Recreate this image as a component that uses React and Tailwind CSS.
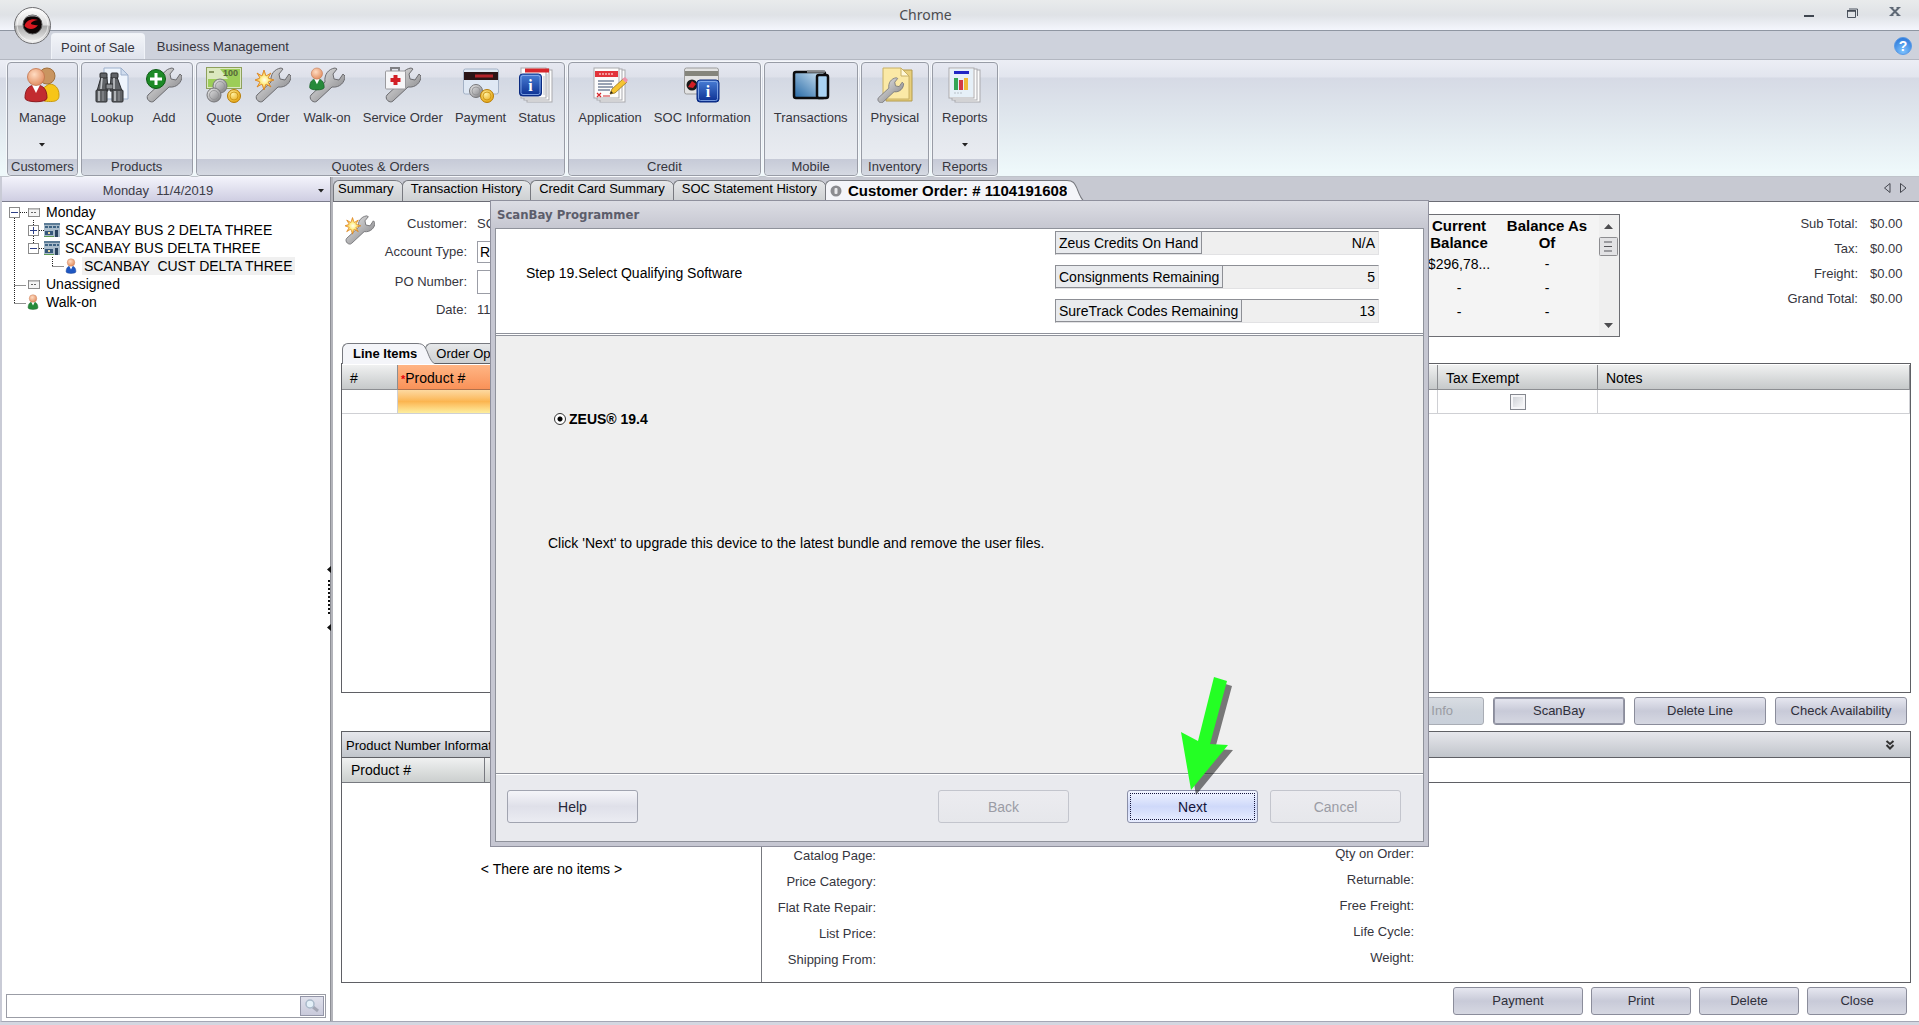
import { useState } from "react";

const WRENCH =
  "M2 28 L16 15 C15 8 19 2 26 1 L28 2 L24 7 L25 12 L30 13 L34 7 L36 9 C36 15 31 21 23 20 L8 34 C5 37 -1 32 2 28 Z";

// Shared gradients for the icons
const IconDefs = () => (
  <svg width="0" height="0" className="absolute" aria-hidden="true">
    <defs>
      <linearGradient id="steel" x1="0" y1="0" x2="1" y2="1">
        <stop offset="0" stopColor="#eeeeee" />
        <stop offset="0.5" stopColor="#b4b4b6" />
        <stop offset="1" stopColor="#77777a" />
      </linearGradient>
      <radialGradient id="skin" cx="0.4" cy="0.35" r="0.7">
        <stop offset="0" stopColor="#ffdcc2" />
        <stop offset="1" stopColor="#e08a5c" />
      </radialGradient>
      <radialGradient id="gold" cx="0.4" cy="0.35" r="0.7">
        <stop offset="0" stopColor="#fff0a0" />
        <stop offset="1" stopColor="#e3a008" />
      </radialGradient>
      <radialGradient id="glow">
        <stop offset="0" stopColor="#fffdf0" />
        <stop offset="0.4" stopColor="#fff08a" />
        <stop offset="1" stopColor="#f39a1e" />
      </radialGradient>
      <linearGradient id="blue" x1="0" y1="0" x2="0" y2="1">
        <stop offset="0" stopColor="#4a7fd6" />
        <stop offset="1" stopColor="#0b2f91" />
      </linearGradient>
      <linearGradient id="screen" x1="1" y1="0" x2="0" y2="1">
        <stop offset="0" stopColor="#d9ecf9" />
        <stop offset="1" stopColor="#2467a4" />
      </linearGradient>
      <linearGradient id="orb" x1="0" y1="0" x2="0" y2="1">
        <stop offset="0" stopColor="#ffffff" />
        <stop offset="0.48" stopColor="#dcdcdc" />
        <stop offset="0.52" stopColor="#a9a9a9" />
        <stop offset="1" stopColor="#f6f6f6" />
      </linearGradient>
      <linearGradient id="tab" x1="0" y1="0" x2="0" y2="1">
        <stop offset="0" stopColor="#e6e8ea" />
        <stop offset="0.5" stopColor="#d9dbdd" />
        <stop offset="1" stopColor="#cdd0d2" />
      </linearGradient>
      <radialGradient id="help" cx="0.5" cy="0.8" r="0.8">
        <stop offset="0" stopColor="#7fc4ff" />
        <stop offset="1" stopColor="#2b76d8" />
      </radialGradient>
    </defs>
  </svg>
);

const Icon = ({ children, className = "size-9" }) => (
  <svg viewBox="0 0 36 36" className={className} aria-hidden="true">
    {children}
  </svg>
);

const Wrench = () => <path d={WRENCH} fill="url(#steel)" stroke="#6c6c70" strokeWidth="1" />;

const Coin = ({ cx, cy, r = 6.5, gold }) => (
  <g>
    <circle cx={cx} cy={cy} r={r} fill={gold ? "url(#gold)" : "url(#steel)"} stroke={gold ? "#b87d08" : "#77777a"} />
    <circle cx={cx} cy={cy} r={r - 2.5} fill="none" stroke={gold ? "#c8900f" : "#909093"} strokeWidth="0.8" />
  </g>
);

const Star = () => (
  <path
    d="M9 3 L11 9 L16 6 L13 11 L19 13 L13 15 L16 20 L11 17 L9 23 L7 17 L2 20 L5 15 L0 13 L5 11 L2 6 L7 9 Z"
    fill="url(#glow)"
    stroke="#d9801a"
    strokeWidth="0.8"
  />
);

const InfoBadge = ({ x, y, s }) => (
  <g>
    <rect x={x} y={y} width={s} height={s} rx="3" fill="url(#blue)" stroke="#0a2a80" />
    <rect x={x + 1.5} y={y + 1.5} width={s - 3} height={s - 3} rx="2" fill="none" stroke="#8fb3ee" strokeWidth="0.8" />
    <text x={x + s / 2} y={y + s * 0.76} textAnchor="middle" fontSize={s * 0.72} fontWeight="bold" fill="#fff" className="font-['Liberation_Serif',serif]">
      i
    </text>
  </g>
);

const Pages = () => (
  <g fill="#fcfcfc" stroke="#a9a9ad">
    <rect x="8" y="3" width="25" height="32" />
    <rect x="5" y="2" width="25" height="31" />
    <rect x="2" y="1" width="25" height="30" />
  </g>
);

const Person = ({ shirt, edge }) => (
  <g>
    <path d="M1 31 C1 22 5 18 12 18 C19 18 23 22 23 31 C23 36 1 36 1 31 Z" fill={shirt} stroke={edge} />
    <path d="M8 18 L12 26 L16 18 Z" fill="#fff" />
    <circle cx="12" cy="10" r="8.5" fill="url(#skin)" stroke="#c0714a" strokeWidth="0.8" />
  </g>
);

const icons = {
  manage: (
    <Icon>
      <path d="M20 34 C34 36 35 32 35 28 C35 21 31 17 25 17 L18 22 Z" fill="#f7c518" stroke="#c99a10" />
      <circle cx="23" cy="9" r="8" fill="#c99560" stroke="#a0703c" />
      <Person shirt="#c22b30" edge="#8e1a1e" />
    </Icon>
  ),
  lookup: (
    <Icon>
      <path d="M10 1 H27 L34 8 V32 H10 Z" fill="#eef4fc" stroke="#9db0cc" />
      <path d="M27 1 V8 H34 Z" fill="#cfdcee" stroke="#9db0cc" />
      <g fill="#606367" stroke="#2a2c2f">
        <path d="M7 10 H13 L14 24 H3 Z M17 10 H23 L28 24 H16 Z" />
        <rect x="6" y="6" width="7" height="5" rx="1" />
        <rect x="17" y="6" width="7" height="5" rx="1" />
        <rect x="12" y="17" width="7" height="5" fill="#8b8e92" />
        <rect x="2" y="23" width="11" height="12" rx="1" />
        <rect x="18" y="23" width="11" height="12" rx="1" />
      </g>
      <path d="M5 24 V34 M8 11 L7 22 M21 24 V34 M20 11 V22" stroke="#c3c6ca" strokeWidth="1.6" />
      <path d="M9 24 V34 M25 24 V34" stroke="#8d9094" strokeWidth="1.2" />
    </Icon>
  ),
  add: (
    <Icon>
      <Wrench />
      <circle cx="10" cy="12" r="9.5" fill="#1d8a26" stroke="#0d5a14" />
      <path d="M10 6 V18 M4 12 H16" stroke="#fff" strokeWidth="3" />
    </Icon>
  ),
  quote: (
    <Icon>
      <rect x="0.5" y="0.5" width="35" height="21" fill="#dbe8bf" stroke="#8ea05c" />
      <path d="M2 12 H22 L14 2 H34 V20 H2 Z" fill="#8cc63f" fillOpacity="0.8" />
      <path d="M3 5 H8" stroke="#6a7a40" strokeWidth="1.5" />
      <text x="17" y="9" fontSize="9" fontWeight="bold" fill="#56683a">100</text>
      <Coin cx={14} cy={19} r={7} />
      <Coin cx={8} cy={28} r={7} />
      <Coin cx={28} cy={29} gold />
    </Icon>
  ),
  order: (
    <Icon>
      <Wrench />
      <Star />
    </Icon>
  ),
  walkon: (
    <Icon>
      <Wrench />
      <g transform="scale(0.66)">
        <Person shirt="#268a3a" edge="#135a22" />
      </g>
    </Icon>
  ),
  service: (
    <Icon>
      <Wrench />
      <path d="M6 4 V1 H14 V4" fill="none" stroke="#808084" strokeWidth="2" />
      <rect x="0.5" y="4" width="20" height="18" rx="1" fill="#f6f6f8" stroke="#9a9a9e" />
      <path d="M10.500 8 V18 M5.500 13 H15.500" stroke="#d21f26" strokeWidth="4" />
    </Icon>
  ),
  payment: (
    <Icon className="h-9 w-10">
      <rect x="0.5" y="2" width="35" height="25" rx="2" fill="#dfe8f4" stroke="#a4b2c6" />
      <rect x="1" y="5" width="34" height="8" fill="#2a1416" />
      <path d="M12 9 H30" stroke="#b3222a" strokeWidth="3" />
      <Coin cx={13} cy={24} />
      <Coin cx={24} cy={29} gold />
    </Icon>
  ),
  status: (
    <Icon>
      <Pages />
      <rect x="6" y="1.500" width="24" height="4" fill="#d7262b" />
      <path d="M28 7 V30 M25 9 V28" stroke="#c2c4ca" strokeWidth="1" />
      <InfoBadge x={0.5} y={7} s={22} />
    </Icon>
  ),
  application: (
    <Icon>
      <Pages />
      <rect x="3" y="4" width="23" height="6" fill="#e2343b" />
      <path d="M7 7 H21" stroke="#f7b9bb" strokeWidth="1.500" strokeDasharray="2 1" />
      <path d="M6 14 H22 M6 17 H20 M6 20 H21 M6 23 H18" stroke="#75839a" strokeWidth="1.300" />
      <path d="M5 26 L9 30 M9 26 L5 30" stroke="#d7262b" strokeWidth="1.200" />
      <path d="M11 29 H18" stroke="#d7262b" />
      <path d="M18 27 L20 22 L31 12 L35 15 L23 26 Z" fill="#f5c431" stroke="#97721a" strokeWidth="0.8" />
      <path d="M30 12 L33 10 L36 13 L34 16 Z" fill="#ee93a8" />
      <path d="M18 27 L19 24 L21 26 Z" fill="#222" />
    </Icon>
  ),
  soc: (
    <Icon className="h-9 w-10">
      <rect x="0.500" y="1" width="34" height="26" rx="2" fill="#e3e3e3" stroke="#9b9b9b" />
      <rect x="1" y="4" width="33" height="5" fill="#85857c" />
      <circle cx="8" cy="18" r="5.500" fill="#1a1a1a" />
      <path d="M4 20 L8 14 L12 17 L9 21 Z" fill="#d21f26" />
      <InfoBadge x={13} y={13} s={22} />
    </Icon>
  ),
  transactions: (
    <Icon className="h-9 w-10">
      <rect x="1" y="5" width="31" height="26" rx="2" fill="url(#screen)" stroke="#0c0c0e" strokeWidth="2.500" />
      <path d="M14 4.500 H32" stroke="#85888c" strokeWidth="2.500" />
      <rect x="24" y="8" width="11" height="23" rx="2" fill="#a9d2f2" stroke="#0c0c0e" strokeWidth="2.500" />
    </Icon>
  ),
  physical: (
    <Icon>
      <path d="M9 3 H35 V34 H9 Z" fill="#e8cf7c" stroke="#b39a4c" />
      <path d="M6 1 H24 L32 9 V32 H6 Z" fill="#fbe9a6" stroke="#c8b064" />
      <path d="M24 1 V9 H32 Z" fill="#fff8d8" stroke="#c8b064" />
      <g transform="translate(0 10) scale(0.74)">
        <Wrench />
      </g>
    </Icon>
  ),
  reports: (
    <Icon>
      <Pages />
      <rect x="3" y="2" width="23" height="28" fill="#e6f0f8" />
      <rect x="7" y="4" width="15" height="3" fill="#2026c4" />
      <rect x="7" y="11" width="4" height="12" fill="#35a556" />
      <rect x="12" y="13" width="4" height="10" fill="#d23a44" />
      <rect x="17" y="11" width="4" height="12" fill="#f0bb38" />
      <path d="M7 26 H16" stroke="#b8c0c8" strokeDasharray="2 1" />
    </Icon>
  ),
};

const ribbon = [
  { title: "Customers", items: [{ label: "Manage", icon: "manage", menu: true }] },
  { title: "Products", items: [{ label: "Lookup", icon: "lookup" }, { label: "Add", icon: "add" }] },
  {
    title: "Quotes & Orders",
    items: [
      { label: "Quote", icon: "quote" },
      { label: "Order", icon: "order" },
      { label: "Walk-on", icon: "walkon" },
      { label: "Service Order", icon: "service" },
      { label: "Payment", icon: "payment" },
      { label: "Status", icon: "status" },
    ],
  },
  { title: "Credit", items: [{ label: "Application", icon: "application" }, { label: "SOC Information", icon: "soc" }] },
  { title: "Mobile", items: [{ label: "Transactions", icon: "transactions" }] },
  { title: "Inventory", items: [{ label: "Physical", icon: "physical" }] },
  { title: "Reports", items: [{ label: "Reports", icon: "reports", menu: true }] },
];

const Caret = ({ className = "" }) => (
  <svg viewBox="0 0 6 4" className={`h-1 w-1.5 ${className}`} aria-hidden="true">
    <path d="M0 0 H6 L3 3.500 Z" fill="#222" />
  </svg>
);

const TitleBar = () => (
  <header className="relative flex h-[31px] shrink-0 items-center justify-center border-b border-[#8f96a2] bg-linear-to-b from-[#e9ebec] via-[#dfe2e6] to-[#f4f6fd]">
    <h1 className="pr-[68px] font-['Noto_Sans',sans-serif] text-sm text-[#4c4c50]">Chrome</h1>
    <div className="absolute top-0 right-3.5 flex h-[26px] items-center gap-[23px]">
      <button aria-label="Minimize" className="w-5">
        <svg viewBox="0 0 20 14" className="h-3.5 w-5"><path d="M5 10 H15" stroke="#3f4650" strokeWidth="2" /></svg>
      </button>
      <button aria-label="Restore" className="w-5">
        <svg viewBox="0 0 20 14" className="h-3.5 w-5">
          <path d="M5.500 4.500 H13.500 V11.500 H5.500 Z M7 3 H15.500 V10" fill="none" stroke="#4d5560" />
          <path d="M5 5 H14" stroke="#3f4650" strokeWidth="1.500" />
        </svg>
      </button>
      <button aria-label="Close window" className="w-5">
        <svg viewBox="0 0 20 14" className="h-3.5 w-5">
          <path d="M6 1.500 L14 9.500 M14 1.500 L6 9.500" stroke="#5e6875" strokeWidth="2" />
          <path d="M4.500 1.500 H8.500 M11.500 1.500 H15.500 M4.500 9.500 H8.500 M11.500 9.500 H15.500" stroke="#5e6875" />
        </svg>
      </button>
    </div>
    <button aria-label="Application menu" className="absolute top-[7px] left-3.5 z-10 size-[37px]">
      <svg viewBox="0 0 37 37" className="size-[37px]">
        <circle cx="18.500" cy="18.500" r="18" fill="url(#orb)" stroke="#6d6d70" />
        <circle cx="18.500" cy="18.500" r="15.500" fill="none" stroke="#fff" strokeOpacity="0.600" />
        <circle cx="18.500" cy="17.500" r="9.500" fill="#0d0505" stroke="#555" />
        <path d="M10.500 19 C12 13 18 11 24 13 C20 13.500 17 15 17 17 C19 18 22 18.500 24 18 C21 23 14 23 10.500 19 Z" fill="#d81820" />
        <path d="M11 11 C14 7 23 7 26 11 C22 9 15 9 11 11 Z" fill="#8f8f92" />
      </svg>
    </button>
  </header>
);

const RibbonTabs = () => (
  <nav className="flex h-[29px] shrink-0 items-end border-b border-[#b3b7c1] bg-[#ced2dc] pl-[51px]">
    <a href="#pos" className="flex h-[26px] items-center rounded-t border border-b-0 border-[#f0f3f8] bg-linear-to-b from-[#f3f5f9] to-[#dfe3ec] px-[9px] pt-0.5">
      Point of Sale
    </a>
    <a href="#business" className="flex h-[26px] items-center px-3 pt-0.5">Business Management</a>
    <button aria-label="Help topics" className="mr-[7px] mb-1 ml-auto">
      <svg viewBox="0 0 18 18" className="size-[18px]">
        <circle cx="9" cy="9" r="8.500" fill="url(#help)" stroke="#5b9be6" />
        <text x="9" y="14" textAnchor="middle" fontSize="14" fontWeight="bold" fill="#fff">?</text>
      </svg>
    </button>
  </nav>
);

const Ribbon = () => (
  <div className="flex h-[117px] shrink-0 gap-[3px] border-b border-[#bfc3ca] bg-[linear-gradient(#eceef5,#e2e5ee_17px,#d6dae5_18px,#dfe6ed_55px,#eef8fa_110px)] pt-0.5 pl-[7px]">
    {ribbon.map((group) => (
      <section key={group.title} className="flex flex-col rounded-sm border border-[#989ca6] bg-[linear-gradient(#e6e8f1,#dee1ea_14px,#d3d8e3_15px,#dfe3ea_50px,#e9ecf1_96px)] shadow-[0_0_0_1px_#f6f8fb]">
        <div className="flex flex-1 justify-center px-[3px]">
          {group.items.map((item) => (
            <button key={item.label} className="flex min-w-[49px] flex-col items-center px-1.5 pt-1">
              {icons[item.icon]}
              <span className="mt-[7px] leading-4">{item.label}</span>
              {item.menu && <Caret className="mt-[17px]" />}
            </button>
          ))}
        </div>
        <h2 className="rounded-b-sm bg-linear-to-b from-[#c6cad7] to-[#d5d9e2] px-[3px] text-center leading-4">{group.title}</h2>
      </section>
    ))}
  </div>
);

const Expander = ({ open }) => (
  <svg viewBox="0 0 11 11" className="size-[11px] shrink-0" aria-hidden="true">
    <rect x="0.500" y="0.500" width="10" height="10" fill="#fff" stroke="#8a8a8a" />
    <path d={open ? "M2 5.500 H9" : "M2 5.500 H9 M5.500 2 V9"} stroke="#2d3f87" />
  </svg>
);

const treeIcons = {
  card: (
    <svg viewBox="0 0 12 12" className="h-3 w-3 shrink-0" aria-hidden="true">
      <rect x="0.500" y="2.500" width="11" height="8" fill="#f4f4f4" stroke="#8a8a8a" />
      <path d="M1 3 H11" stroke="#b9b9b9" strokeWidth="1.500" />
      <path d="M3 6.500 H9" stroke="#666" strokeDasharray="2 1" />
    </svg>
  ),
  shop: (
    <svg viewBox="0 0 16 14" className="h-3.5 w-4 shrink-0" aria-hidden="true">
      <rect width="16" height="14" fill="#a9bccb" />
      <rect width="16" height="2" fill="#5d7d97" />
      <path d="M1 4 H15" stroke="#3f6484" strokeWidth="2" strokeDasharray="3 1" />
      <rect x="1" y="8" width="8" height="4" fill="#35577a" />
      <rect x="11" y="7" width="3" height="7" fill="#2b4560" />
      <path d="M0 13.500 H10" stroke="#5f9a54" />
      <rect x="4" y="9" width="2" height="2" fill="#e9d9a0" />
    </svg>
  ),
  blue: (
    <svg viewBox="0 0 24 36" className="h-4 w-3 shrink-0" aria-hidden="true"><Person shirt="#1f57c2" edge="#123a8c" /></svg>
  ),
  green: (
    <svg viewBox="0 0 24 36" className="h-4 w-3 shrink-0" aria-hidden="true"><Person shirt="#268a3a" edge="#135a22" /></svg>
  ),
};

const Sidebar = () => (
  <aside className="flex w-[328px] shrink-0 flex-col bg-white">
    <button className="flex h-[25px] items-center border-b border-[#7b7c8c] bg-linear-to-b from-[#f3f3fb] to-[#cfcee2] pt-1 pr-1.5 text-[#3c3c48]">
      <span className="flex-1 pr-1 text-center whitespace-pre">Monday  11/4/2019</span>
      <Caret />
    </button>
    <div className="relative flex-1 pt-px text-black">
      {/* connector lines */}
      <svg className="absolute top-px left-0 h-28 w-20" aria-hidden="true">
        <path d="M12.500 15 V100 M12.500 82.500 H24 M12.500 100.500 H24 M18 9.500 H26 M31.500 17 V40 M37 27.500 H42 M37 45.500 H42 M50.500 54 V64 M50.500 63.500 H62" fill="none" stroke="#222" strokeDasharray="1 1" />
      </svg>
      <ul className="relative text-sm leading-4.5">
        <li className="flex items-center pl-[7px]">
          <Expander open /><span className="w-2" />{treeIcons.card}<span className="pl-1.5">Monday</span>
        </li>
        <li className="flex items-center pl-[26px]">
          <Expander /><span className="w-[5px]" />{treeIcons.shop}<span className="pl-[5px]">SCANBAY BUS 2 DELTA THREE</span>
        </li>
        <li className="flex items-center pl-[26px]">
          <Expander open /><span className="w-[5px]" />{treeIcons.shop}<span className="pl-[5px]">SCANBAY BUS DELTA THREE</span>
        </li>
        <li className="flex items-center pl-[63px]">
          {treeIcons.blue}<span className="ml-[5px] bg-[#f0f0f0] px-0.5 whitespace-pre">SCANBAY  CUST DELTA THREE</span>
        </li>
        <li className="flex items-center pl-[26px]">{treeIcons.card}<span className="pl-1.5">Unassigned</span></li>
        <li className="flex items-center pl-[25px]">{treeIcons.green}<span className="pl-[7px]">Walk-on</span></li>
      </ul>
    </div>
    <form className="mr-1 mb-[3px] ml-1 flex h-6 border border-[#9b9da6] p-px" onSubmit={(e) => e.preventDefault()}>
      <input aria-label="Search customers" className="min-w-0 flex-1 px-1 outline-none" />
      <button aria-label="Search" className="flex w-6 items-center justify-center border border-[#9496a8] bg-linear-to-b from-[#e0e1ec] to-[#c9cadb]">
        <svg viewBox="0 0 16 16" className="size-4">
          <path d="M9 9 L14 13" stroke="#a3a6b4" strokeWidth="3" />
          <circle cx="6" cy="6" r="4" fill="#e4f0f8" stroke="#a9b9c9" strokeWidth="1.500" />
        </svg>
      </button>
    </form>
  </aside>
);

const Splitter = () => (
  <div className="relative w-[3px] shrink-0 border-l border-[#8e8f96] bg-[#b4b5bb]">
    <svg viewBox="0 0 5 66" className="absolute top-1/2 -left-1 h-[66px] w-[5px] -translate-y-1/2" aria-hidden="true">
      <path d="M4 0 V7 L0 3.500 Z M4 58 V65 L0 61.500 Z" fill="#111" />
      <path d="M2 14 V50" stroke="#111" strokeWidth="2" strokeDasharray="2 2" />
    </svg>
  </div>
);

// Tab with a rounded left corner and a slanted right side
const Tab = ({ children, active, className = "pl-2" }) => (
  <a href="#tab" className={`flex items-stretch ${active ? "relative z-10 -mb-px" : ""}`}>
    <span className={`flex items-center rounded-tl-md border-t border-l border-[#77797f] ${active ? "bg-[#f4f5f9] font-bold" : "bg-linear-to-b from-[#e6e8ea] via-[#d9dbdd] to-[#cdd0d2]"} ${className}`}>
      {children}
    </span>
    <svg viewBox="0 0 18 21" preserveAspectRatio="none" className="-mr-2.5 h-full w-[18px]" aria-hidden="true">
      <path d="M0 0.500 C7 0.500 8 4 10 8 C12 13 14 19 18 21 H0 Z" fill={active ? "#f4f5f9" : "url(#tab)"} />
      <path d="M0 0.500 C7 0.500 8 4 10 8 C12 13 14 19 18 21" fill="none" stroke="#77797f" />
    </svg>
  </a>
);

const DocTabs = () => (
  <nav className="flex h-[25px] shrink-0 border-b border-[#6b6c75] bg-[#c7c9d2] pt-[3px] text-black">
    <Tab className="pb-1 pl-1">Summary</Tab>
    <Tab className="pb-1 pl-2">Transaction History</Tab>
    <Tab className="pb-1 pl-2">Credit Card Summary</Tab>
    <Tab className="pb-1 pl-2">SOC Statement History</Tab>
    <Tab active className="pl-1">
      <svg viewBox="0 0 12 12" className="mr-1.5 mb-0.5 size-3" aria-hidden="true">
        <circle cx="6" cy="6" r="5.500" fill="#8b8c90" />
        <rect x="4.500" y="3" width="3" height="6" rx="1" fill="#e9e9ec" />
      </svg>
      <span className="text-[15px]">Customer Order: # 1104191608</span>
    </Tab>
    <div className="mr-2.5 ml-auto flex items-center gap-1">
      <button aria-label="Previous tab">
        <svg viewBox="0 0 12 12" className="mb-1.5 size-3"><path d="M9 1.500 V10.500 L3.500 6 Z" fill="none" stroke="#44464e" /></svg>
      </button>
      <button aria-label="Next tab">
        <svg viewBox="0 0 12 12" className="mb-1.5 size-3"><path d="M3.500 1.500 V10.500 L9 6 Z" fill="none" stroke="#44464e" /></svg>
      </button>
    </div>
  </nav>
);

const totals = [
  ["Sub Total:", "$0.00"],
  ["Tax:", "$0.00"],
  ["Freight:", "$0.00"],
  ["Grand Total:", "$0.00"],
];

const OrderHeader = () => (
  <section className="flex h-[141px] shrink-0 items-start overflow-hidden">
    <Icon className="mt-3 ml-1 h-8 w-[30px]"><Wrench /><Star /></Icon>
    <div className="mt-2 grid grid-cols-[92px_200px] items-center gap-x-2.5 text-right">
      <span className="leading-7">Customer:</span>
      <span className="text-left">SCANBAY</span>
      <label htmlFor="account" className="leading-7">Account Type:</label>
      <input id="account" defaultValue="R" className="h-[22px] border border-[#9b9da6] px-0.5 text-sm text-black outline-none" />
      <label htmlFor="po" className="leading-8">PO Number:</label>
      <input id="po" className="h-6 border border-[#9b9da6] px-1 outline-none" />
      <span className="leading-6">Date:</span>
      <span className="text-left">11/4/2019</span>
    </div>
    <div className="mt-3 ml-auto flex h-[123px] w-[280px] overflow-hidden border border-[#6d6e73] bg-[#f4f4f4] text-sm text-black">
      <div className="flex flex-1 justify-end overflow-hidden pr-2">
        <table className="h-fit w-[176px] table-fixed text-center">
          <thead>
            <tr className="text-[15px] leading-[17px]">
              <th className="h-[37px] px-2">Current Balance</th>
              <th className="h-[37px]">Balance As Of</th>
            </tr>
          </thead>
          <tbody>
            {["$296,78...", "-", "-", "-"].map((balance, i) => (
              <tr key={i}>
                <td className="h-6 leading-4">{balance}</td>
                <td className="h-6 leading-4">-</td>
              </tr>
            ))}
          </tbody>
        </table>
      </div>
      <svg viewBox="0 0 20 121" className="h-full w-5 bg-[#efefef]" aria-hidden="true">
        <path d="M5 14 H14 L9.500 9 Z M5 108 H14 L9.500 113 Z" fill="#4d4d50" />
        <rect x="0.500" y="22.500" width="18" height="18" rx="1" fill="#e2e2e4" stroke="#8d8d90" />
        <path d="M5 27 H13 M5 31.500 H13 M5 36 H13" stroke="#55555a" />
      </svg>
    </div>
    <dl className="mt-[9px] grid w-[299px] grid-cols-[1fr_49px] leading-[25px]">
      {totals.map(([label, value]) => (
        <div key={label} className="contents">
          <dt className="pr-3 text-right">{label}</dt>
          <dd>{value}</dd>
        </div>
      ))}
    </dl>
  </section>
);

const headCell = "h-[25px] border-r border-b border-[#8c8e92] bg-linear-to-b from-[#f0f1f1] to-[#c6c9ca] pt-0.5 pl-2 text-left font-normal";
const bodyCell = "h-6 border-r border-b border-[#cfd0d4]";

const LineItems = () => (
  <section className="mr-2 flex flex-1 flex-col">
    <nav className="flex h-5 pl-px text-black">
      <Tab active className="pl-2.5">Line Items</Tab>
      <Tab className="pl-2.5">Order Options</Tab>
    </nav>
    <div className="flex-1 border border-[#5f6065] pt-px">
      <table className="w-full table-fixed border-separate border-spacing-0 text-sm text-black">
        <colgroup>
          <col className="w-14" />
          <col className="w-[150px]" />
          <col />
          <col className="w-40" />
          <col className="w-[312px]" />
        </colgroup>
        <thead>
          <tr>
            <th className={headCell}>#</th>
            <th className="h-[25px] border-b border-[#b0714c] bg-linear-to-b from-[#ffb584] to-[#f99258] pt-0.5 pl-[3px] text-left font-normal">
              <span className="text-[11px] font-bold text-red-600">*</span>Product #
            </th>
            <th className={headCell} />
            <th className={headCell}>Tax Exempt</th>
            <th className={headCell}>Notes</th>
          </tr>
        </thead>
        <tbody>
          <tr>
            <td className={bodyCell} />
            <td className="h-6 border-b border-[#cfd0d4] bg-linear-to-b from-[#fdd9a0] via-[#fbb550] to-[#fdee9e]" />
            <td className={bodyCell} />
            <td className={bodyCell}>
              <input
                type="checkbox"
                aria-label="Tax Exempt"
                className="mx-auto block size-4 appearance-none border border-[#85888f] bg-linear-to-br from-[#c9ccd2] to-white shadow-[inset_0_0_0_2px_#f6f6f8]"
              />
            </td>
            <td className={bodyCell} />
          </tr>
        </tbody>
      </table>
    </div>
  </section>
);

const PlainButton = ({ children, className = "", ...props }) => (
  <button
    className={`h-7 rounded-[3px] border border-[#8b8d9b] bg-linear-to-b from-[#e6e7f0] via-[#c8cad8] to-[#d6d8e2] text-[#2f2f3a] disabled:border-[#a9adb5] disabled:from-[#d9dde3] disabled:via-[#ccd2da] disabled:to-[#c9d0da] disabled:text-[#9a9ca3] ${className}`}
    {...props}
  >
    {children}
  </button>
);

const leftLabels = ["Catalog Page:", "Price Category:", "Flat Rate Repair:", "List Price:", "Shipping From:"];
const rightLabels = ["Qty on Order:", "Returnable:", "Free Freight:", "Life Cycle:", "Weight:"];

const ProductInfo = () => (
  <section className="mr-2 flex h-[252px] shrink-0 flex-col border border-[#5f6065] text-black">
    <div className="flex h-[26px] items-center justify-between border-b border-[#5f6065] bg-linear-to-b from-[#e6e7ec] to-[#c1c5cb] pt-0.5 pr-[15px] pl-1">
      <h2>Product Number Information</h2>
      <button aria-label="Collapse">
        <svg viewBox="0 0 10 10" className="mb-0.5 size-2.5"><path d="M1.500 1 L5 4 L8.500 1 M1.500 5 L5 8.500 L8.500 5" fill="none" stroke="#333" strokeWidth="2" /></svg>
      </button>
    </div>
    <div className="flex min-h-0 flex-1">
      <div className="flex w-[420px] flex-col border-r border-[#77797f] text-sm">
        <div className="flex h-[25px] items-center border-b border-[#77797f] bg-linear-to-b from-[#f0f1f1] to-[#cbcfce] leading-6">
          <span className="w-[143px] border-r border-[#77797f] pl-[9px]">Product #</span>
        </div>
        <p className="mt-[76px] text-center">&lt; There are no items &gt;</p>
      </div>
      <div className="flex flex-1 flex-col text-[#36363e]">
        <div className="h-[25px] border-b border-[#5f6065]" />
        <div className="flex flex-1 items-end pb-[9px] text-right leading-[26px]">
          <ul className="w-[114px]">{leftLabels.map((l) => <li key={l}>{l}</li>)}</ul>
          <ul className="w-[538px] pb-0.5">{rightLabels.map((l) => <li key={l}>{l}</li>)}</ul>
        </div>
      </div>
    </div>
  </section>
);

const credits = [
  ["Zeus Credits On Hand", "N/A"],
  ["Consignments Remaining", "5"],
  ["SureTrack Codes Remaining", "13"],
];

const DialogButton = ({ children, className = "", ...props }) => (
  <button
    className={`h-[33px] w-[131px] rounded-[3px] border bg-linear-to-b text-sm disabled:border-[#c3c5cd] disabled:text-[#9b9ca5] ${className}`}
    {...props}
  >
    {children}
  </button>
);

const ProgrammerDialog = () => {
  const [software, setSoftware] = useState("zeus");

  return (
    <div className="pointer-events-none absolute inset-0 z-20 flex items-center justify-center pt-[22px]">
      <div role="dialog" aria-labelledby="dialog-title" className="pointer-events-auto relative w-[939px] border border-[#8f909d] bg-[#c6c7d2] px-1 pb-1 text-black">
        <h2 id="dialog-title" className="-mx-1 flex h-[27px] items-center bg-linear-to-b from-[#dcdde4] to-[#c6c7d1] pl-1.5 font-['DejaVu_Sans_Condensed','Noto_Sans',sans-serif] text-[13px] font-bold text-[#5c5d6b]">
          ScanBay Programmer
        </h2>

        <div className="border border-[#8f929b] bg-white">
          <div className="flex h-[105px] items-start justify-between border-b border-[#8f929b] pt-0.5 pr-11 pl-[30px] text-sm">
            <p className="mt-8 leading-5">Step 19.Select Qualifying Software</p>
            <dl className="flex w-[324px] flex-col gap-2.5">
              {credits.map(([label, value]) => (
                <div key={label} className="flex h-6 items-center justify-between border border-[#e2e2e4] border-t-[#8d8f95] border-l-[#8d8f95] bg-[#efefef]">
                  <dt className="h-full border-r border-b border-[#8d8f95] bg-[#e9ebee] px-[3px] leading-[22px]">{label}</dt>
                  <dd className="pr-[3px]">{value}</dd>
                </div>
              ))}
            </dl>
          </div>

          <div className="mt-px h-[439px] border-t border-b border-[#8f929b] bg-[#efefef] pt-[73px] pl-[52px] text-sm">
            <label className="flex h-5 items-center gap-[3px] pl-1.5 font-bold">
              <input
                type="radio"
                name="software"
                checked={software === "zeus"}
                onChange={() => setSoftware("zeus")}
                className="size-3 appearance-none rounded-full border border-[#333] bg-white checked:bg-[radial-gradient(circle,#000_2px,#fff_3px)]"
              />
              ZEUS® 19.4
            </label>
            <p className="mt-[104px] leading-5">Click 'Next' to upgrade this device to the latest bundle and remove the user files.</p>
          </div>

          <div className="mt-px flex h-[66px] items-start bg-[#e9eaee] pt-[15px] pr-[22px] pl-[11px]">
            <DialogButton className="border-[#a1a4b0] from-[#f5f5f9] via-[#dfe0e9] to-[#ebecf2] text-[#26263a]">Help</DialogButton>
            <div className="ml-auto flex">
              <DialogButton disabled className="mr-[58px] from-[#ececf0] to-[#e6e7eb]">Back</DialogButton>
              <DialogButton className="mr-3 border-[#8a8fa8] from-[#f2f5ff] via-[#cfd9fa] to-[#e9eeff] p-0.5 text-[#15153c]">
                <span className="flex h-full items-center justify-center border border-dotted border-[#15153c]">Next</span>
              </DialogButton>
              <DialogButton disabled className="from-[#ececf0] to-[#e6e7eb]">Cancel</DialogButton>
            </div>
          </div>
        </div>

        {/* Arrow pointing at the Next button */}
        <svg viewBox="0 0 56 120" className="pointer-events-none absolute right-[197px] bottom-[54px] h-[120px] w-14 overflow-visible" aria-hidden="true">
          <path d="M39 5 L52 9 L35 72 L53 73 L16 118 L6 60 L23 69 Z" fill="#000" fillOpacity="0.5" transform="translate(5 5)" />
          <path d="M39 5 L52 9 L35 72 L53 73 L16 118 L6 60 L23 69 Z" fill="#24ff24" />
        </svg>
      </div>
    </div>
  );
};

export default function App() {
  return (
    <div className="relative flex h-screen flex-col overflow-hidden bg-[#d4d7e1] font-['Liberation_Sans',Arial,sans-serif] text-[13px] text-[#36363e]">
      <IconDefs />
      <TitleBar />
      <RibbonTabs />
      <Ribbon />
      <div className="mb-[3px] flex min-h-0 flex-1 border-b border-l-2 border-b-[#a5a7b5] border-l-[#c9cbd6]">
        <Sidebar />
        <Splitter />
        <main className="flex min-w-0 flex-1 flex-col bg-white">
          <DocTabs />
          <div className="flex min-h-0 flex-1 flex-col pl-2">
            <OrderHeader />
            <LineItems />
            <div className="flex justify-end gap-[9px] pt-1 pr-3 pb-1.5">
              <PlainButton disabled className="w-[132px]">Product Info</PlainButton>
              <PlainButton className="w-[132px] shadow-[inset_0_0_0_1px_#9496a6]">ScanBay</PlainButton>
              <PlainButton className="w-[132px]">Delete Line</PlainButton>
              <PlainButton className="w-[132px]">Check Availability</PlainButton>
            </div>
            <ProductInfo />
            <div className="flex justify-end gap-2 pt-1 pr-3 pb-1.5">
              <PlainButton className="w-[130px]">Payment</PlainButton>
              <PlainButton className="w-[100px]">Print</PlainButton>
              <PlainButton className="w-[100px]">Delete</PlainButton>
              <PlainButton className="w-[100px]">Close</PlainButton>
            </div>
          </div>
        </main>
      </div>
      <ProgrammerDialog />
    </div>
  );
}
